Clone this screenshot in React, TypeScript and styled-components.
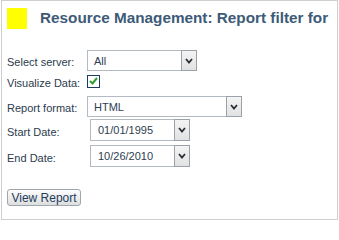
import React from "react";
import styled, { createGlobalStyle } from "styled-components";

const GlobalStyle = createGlobalStyle`
    html, body {
        margin: 0;
        padding: 0;
        background: #ffffff;
        font-family: "Liberation Sans", Arial, sans-serif;
    }
`;

type RowProps = {
    $top: number;
    $height: number;
};

type FieldProps = {
    $width: number;
    $left?: number;
};

const Panel = styled.div`
    box-sizing: border-box;
    margin-left: 1px;
    width: 337px;
    height: 220px;
    border: 1px solid #cfcfcf;
    display: flex;
    flex-direction: column;
    padding: 0 0 0 5px;
`;

const Header = styled.div`
    display: flex;
    align-items: center;
    height: 28px;
    margin-top: 3px;
`;

const Marker = styled.div`
    width: 20px;
    height: 21px;
    background: #ffff00;
`;

const Title = styled.h1`
    margin: 0 0 0 13px;
    font-size: 15.3px;
    font-weight: bold;
    color: #3d5a78;
    white-space: nowrap;
`;

const Row = styled.div<RowProps>`
    display: flex;
    align-items: center;
    margin-top: ${({ $top }) => $top}px;
    height: ${({ $height }) => $height}px;
`;

const Label = styled.label`
    width: 80px;
    padding-top: 3px;
    font-size: 11px;
    color: #2b3b4d;
    white-space: nowrap;
`;

const Field = styled.div<FieldProps>`
    box-sizing: border-box;
    display: flex;
    align-items: stretch;
    height: 100%;
    width: ${({ $width }) => $width}px;
    margin-left: ${({ $left = 0 }) => $left}px;
    border: 1px solid #b4bac2;
    background: #ffffff;
`;

const FieldText = styled.span<{ $indent: number }>`
    flex: 1;
    display: flex;
    align-items: center;
    padding-left: ${({ $indent }) => $indent}px;
    font-size: 11px;
    color: #2e3d4f;
`;

const ArrowButton = styled.span`
    box-sizing: border-box;
    width: 16px;
    margin: -1px -1px -1px 0;
    display: flex;
    align-items: center;
    justify-content: center;
    border: 1px solid #9aa1a8;
    background: linear-gradient(#f4f4f4, #e2e2e2);
`;

const Check = styled.span`
    box-sizing: border-box;
    width: 13px;
    height: 13px;
    border: 1px solid #1d3a63;
    background: #ffffff;
    display: flex;
    align-items: center;
    justify-content: center;
`;

const ReportButton = styled.button`
    box-sizing: border-box;
    width: 74px;
    height: 17px;
    margin-top: 22px;
    padding: 0;
    border: 1px solid #9ea6ae;
    border-radius: 3px;
    background: linear-gradient(#fdfdfd, #dedede);
    font-family: "Liberation Sans", Arial, sans-serif;
    font-size: 12px;
    color: #24405f;
    cursor: pointer;
`;

const Arrow = () => (
    <svg width="8" height="6" viewBox="0 0 8 6">
        <polyline points="1,1 4,4.5 7,1" fill="none" stroke="#2a2f36" strokeWidth="1.8" />
    </svg>
);

const Dropdown: React.FC<{ value: string; width: number; left?: number; indent: number }> = ({
    value,
    width,
    left,
    indent,
}) => (
    <Field $width={width} $left={left}>
        <FieldText $indent={indent}>{value}</FieldText>
        <ArrowButton>
            <Arrow />
        </ArrowButton>
    </Field>
);

export default function App() {
    return (
        <>
            <GlobalStyle />
            <Panel>
                <Header>
                    <Marker />
                    <Title>Resource Management: Report filter for</Title>
                </Header>
                <Row $top={18} $height={21}>
                    <Label>Select server:</Label>
                    <Dropdown value="All" width={110} indent={6} />
                </Row>
                <Row $top={1} $height={18}>
                    <Label>Visualize Data:</Label>
                    <Check>
                        <svg width="9" height="8" viewBox="0 0 9 8">
                            <polyline points="1,4 3.5,6.5 8,1" fill="none" stroke="#2f9e2f" strokeWidth="2" />
                        </svg>
                    </Check>
                </Row>
                <Row $top={6} $height={21}>
                    <Label>Report format:</Label>
                    <Dropdown value="HTML" width={155} indent={6} />
                </Row>
                <Row $top={2} $height={22}>
                    <Label>Start Date:</Label>
                    <Dropdown value="01/01/1995" width={100} left={3} indent={7} />
                </Row>
                <Row $top={4} $height={22}>
                    <Label>End Date:</Label>
                    <Dropdown value="10/26/2010" width={100} left={3} indent={7} />
                </Row>
                <div>
                    <ReportButton>View Report</ReportButton>
                </div>
            </Panel>
        </>
    );
}
